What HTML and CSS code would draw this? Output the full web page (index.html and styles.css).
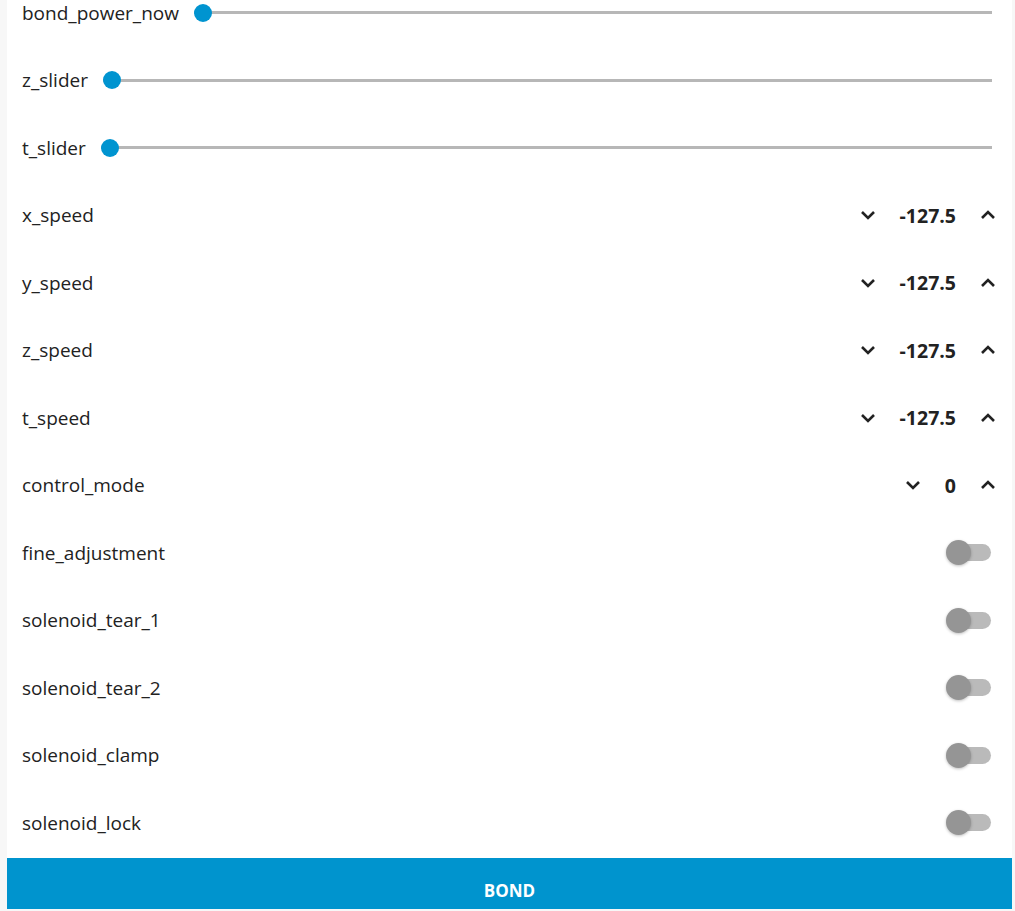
FILE: index.html
```html
<!DOCTYPE html>
<html>
<head>
<meta charset="utf-8">
<link rel="stylesheet" href="styles.css">
</head>
<body>
<div class="page">
  <div class="card">
    <div class="list">
      <div class="row slider-row"><span class="label">bond_power_now</span><div class="slider"><div class="track"></div><div class="thumb"></div></div></div>
      <div class="row slider-row"><span class="label">z_slider</span><div class="slider"><div class="track"></div><div class="thumb"></div></div></div>
      <div class="row slider-row"><span class="label">t_slider</span><div class="slider"><div class="track"></div><div class="thumb"></div></div></div>

      <div class="row"><span class="label">x_speed</span><div class="spinner"><svg class="chev" viewBox="0 0 16 10"><path d="M2 2 L8 8 L14 2"/></svg><span class="value">-127.5</span><svg class="chev" viewBox="0 0 16 10"><path d="M2 8 L8 2 L14 8"/></svg></div></div>
      <div class="row"><span class="label">y_speed</span><div class="spinner"><svg class="chev" viewBox="0 0 16 10"><path d="M2 2 L8 8 L14 2"/></svg><span class="value">-127.5</span><svg class="chev" viewBox="0 0 16 10"><path d="M2 8 L8 2 L14 8"/></svg></div></div>
      <div class="row"><span class="label">z_speed</span><div class="spinner"><svg class="chev" viewBox="0 0 16 10"><path d="M2 2 L8 8 L14 2"/></svg><span class="value">-127.5</span><svg class="chev" viewBox="0 0 16 10"><path d="M2 8 L8 2 L14 8"/></svg></div></div>
      <div class="row"><span class="label">t_speed</span><div class="spinner"><svg class="chev" viewBox="0 0 16 10"><path d="M2 2 L8 8 L14 2"/></svg><span class="value">-127.5</span><svg class="chev" viewBox="0 0 16 10"><path d="M2 8 L8 2 L14 8"/></svg></div></div>
      <div class="row"><span class="label">control_mode</span><div class="spinner"><svg class="chev" viewBox="0 0 16 10"><path d="M2 2 L8 8 L14 2"/></svg><span class="value">0</span><svg class="chev" viewBox="0 0 16 10"><path d="M2 8 L8 2 L14 8"/></svg></div></div>

      <div class="row"><span class="label">fine_adjustment</span><div class="switch"><div class="sw-track"></div><div class="sw-thumb"></div></div></div>
      <div class="row"><span class="label">solenoid_tear_1</span><div class="switch"><div class="sw-track"></div><div class="sw-thumb"></div></div></div>
      <div class="row"><span class="label">solenoid_tear_2</span><div class="switch"><div class="sw-track"></div><div class="sw-thumb"></div></div></div>
      <div class="row"><span class="label">solenoid_clamp</span><div class="switch"><div class="sw-track"></div><div class="sw-thumb"></div></div></div>
      <div class="row"><span class="label">solenoid_lock</span><div class="switch"><div class="sw-track"></div><div class="sw-thumb"></div></div></div>
    </div>
    <button class="bond">BOND</button>
  </div>
</div>
</body>
</html>
```
FILE: styles.css
```css
html, body {
  margin: 0;
  padding: 0;
  background: #f7f7f7;
  overflow: hidden;
}
body {
  font-family: "Open Sans", "Noto Sans", sans-serif;
  color: #222;
}
.page {
  height: 911px;
  padding: 0 3px 0 7px;
  box-sizing: border-box;
}
.card {
  background: #fff;
  height: 909px;
  display: flex;
  flex-direction: column;
  overflow: hidden;
}
.list {
  margin-top: -21px;
  flex: 1;
}
.row {
  height: 67.5px;
  display: flex;
  align-items: center;
  padding: 0 16px 0 15px;
  box-sizing: border-box;
}
.label {
  font-size: 19px;
  white-space: nowrap;
}
.slider-row .label {
  margin-right: 15px;
}
.slider {
  position: relative;
  flex: 1;
  height: 18px;
  display: flex;
  align-items: center;
  margin-right: 4px;
}
.track {
  flex: 1;
  height: 3px;
  background: #b7b7b7;
}
.thumb {
  position: absolute;
  left: 0;
  top: 0;
  width: 18px;
  height: 18px;
  border-radius: 50%;
  background: #0094d0;
}
.spinner {
  margin-left: auto;
  display: flex;
  align-items: center;
  gap: 24px;
}
.chev {
  width: 16px;
  height: 10px;
  fill: none;
  stroke: #222;
  stroke-width: 2.6;
}
.value {
  font-weight: 700;
  font-size: 19.5px;
}
.switch {
  margin-left: auto;
  position: relative;
  width: 45px;
  height: 25px;
  margin-right: 5px;
}
.sw-track {
  position: absolute;
  right: 0;
  top: 4px;
  width: 40px;
  height: 17px;
  border-radius: 9px;
  background: #bababa;
}
.sw-thumb {
  position: absolute;
  left: 0;
  top: 0;
  width: 25px;
  height: 25px;
  border-radius: 50%;
  background: #959595;
  box-shadow: 0 1px 3px rgba(0,0,0,0.25);
}
.bond {
  height: 51px;
  flex: none;
  border: none;
  background: #0094ce;
  color: #fff;
  font-family: "Open Sans", "Noto Sans", sans-serif;
  font-weight: 700;
  font-size: 17px;
  padding-top: 14px;
  margin-bottom: 0;
}
```
